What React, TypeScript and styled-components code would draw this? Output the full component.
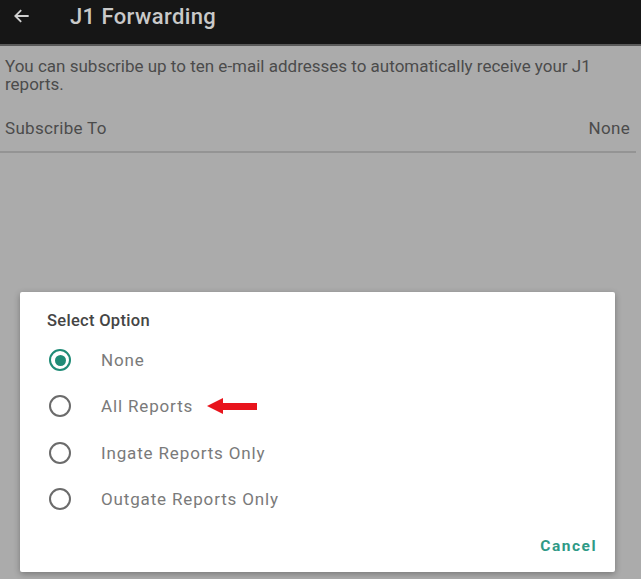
import React from "react";
import styled, { createGlobalStyle } from "styled-components";

const Global = createGlobalStyle`
  html, body { margin: 0; padding: 0; }
  body { background: #ababab; font-family: Roboto, "Noto Sans", sans-serif; }
`;

const Page = styled.div`
  width: 641px;
  height: 579px;
  background: #ababab;
  position: relative;
  overflow: hidden;
`;

const TopBar = styled.header`
  height: 46px;
  background: #161616;
  border-bottom: 2px solid #5a5a5a;
  display: flex;
  align-items: center;
  box-sizing: border-box;
`;

const BackIcon = styled.svg`
  width: 20px;
  height: 20px;
  margin-left: 12px;
  margin-right: 38px;
  margin-top: -12px;
`;

const Title = styled.h1`
  margin: -12px 0 0 0;
  font-size: 22px;
  font-weight: 500;
  color: #c9c9c9;
  letter-spacing: 0.4px;
`;

const Intro = styled.p`
  margin: 11px 6px 0 5px;
  font-size: 17px;
  line-height: 18px;
  color: #4b4b4b;
`;

const SettingRow = styled.div`
  display: flex;
  justify-content: space-between;
  margin: 25px 5px 0 0;
  padding: 0 6px 13px 5px;
  font-size: 17px;
  letter-spacing: 0.3px;
  color: #4b4b4b;
  border-bottom: 2px solid #949494;
`;

const Dialog = styled.div`
  position: absolute;
  left: 20px;
  top: 292px;
  width: 595px;
  height: 280px;
  background: #ffffff;
  border-radius: 2px;
  box-shadow: 0 2px 6px rgba(0, 0, 0, 0.3);
  box-sizing: border-box;
  padding: 19px 18px 0 27px;
  display: flex;
  flex-direction: column;
`;

const DialogTitle = styled.div`
  font-size: 16.5px;
  font-weight: 500;
  color: #454545;
  letter-spacing: 0.3px;
  margin-bottom: 7px;
`;

const OptionRow = styled.div`
  display: flex;
  align-items: center;
  height: 46.3px;
`;

const Radio = styled.span<{ $checked?: boolean }>`
  width: 22px;
  height: 22px;
  box-sizing: border-box;
  border-radius: 50%;
  border: 2px solid ${(p) => (p.$checked ? "#1f8b76" : "#6b6b6b")};
  display: flex;
  align-items: center;
  justify-content: center;
  margin-left: 2px;
  margin-right: 30px;
  &::after {
    content: "";
    display: ${(p) => (p.$checked ? "block" : "none")};
    width: 11px;
    height: 11px;
    border-radius: 50%;
    background: #1f8b76;
  }
`;

const OptionLabel = styled.span`
  font-size: 17px;
  color: #7a7a7a;
  letter-spacing: 0.85px;
`;

const Pointer = styled.svg`
  margin-left: 14px;
  width: 50px;
  height: 16px;
`;

const Actions = styled.div`
  display: flex;
  justify-content: flex-end;
  margin-top: auto;
  padding-bottom: 17px;
`;

const CancelButton = styled.button`
  border: none;
  background: none;
  padding: 0;
  font-family: Roboto, sans-serif;
  font-size: 15.5px;
  font-weight: 700;
  color: #2f9a86;
  letter-spacing: 1.5px;
`;

const options = ["None", "All Reports", "Ingate Reports Only", "Outgate Reports Only"];

export default function App() {
  return (
    <Page>
      <Global />
      <TopBar>
        <BackIcon viewBox="0 0 24 24" fill="none" stroke="#d0d0d0" strokeWidth="2.2">
          <path d="M20 12H4M11 5l-7 7 7 7" />
        </BackIcon>
        <Title>J1 Forwarding</Title>
      </TopBar>
      <Intro>You can subscribe up to ten e-mail addresses to automatically receive your J1 reports.</Intro>
      <SettingRow>
        <span>Subscribe To</span>
        <span>None</span>
      </SettingRow>
      <Dialog>
        <DialogTitle>Select Option</DialogTitle>
        {options.map((o, i) => (
          <OptionRow key={o}>
            <Radio $checked={i === 0} />
            <OptionLabel>{o}</OptionLabel>
            {i === 1 && (
              <Pointer viewBox="0 0 50 16">
                <polygon points="0,8 16,0 16,5 50,5 50,12 16,12 16,16" fill="#e8141c" />
              </Pointer>
            )}
          </OptionRow>
        ))}
        <Actions>
          <CancelButton>Cancel</CancelButton>
        </Actions>
      </Dialog>
    </Page>
  );
}
